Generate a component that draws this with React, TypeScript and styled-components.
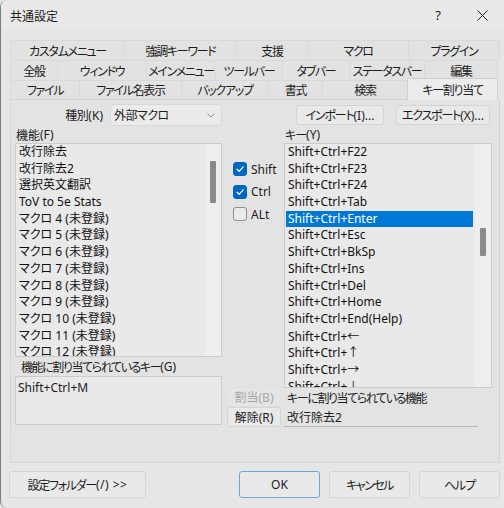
import React from "react";
import styled, { createGlobalStyle } from "styled-components";

const GlobalStyle = createGlobalStyle`
  html, body { margin: 0; padding: 0; background: #e6e6e6; }
  body {
    font-family: "Noto Sans", "Noto Sans CJK JP", sans-serif;
    font-size: 12px;
    color: #1c1c1c;
    font-feature-settings: "palt" 1;
    font-variant-east-asian: proportional-width;
  }
  * { box-sizing: border-box; }
`;

const Window = styled.div`
  width: 504px;
  height: 508px;
  background: #e6e6e6;
  border-left: 1px solid #7c7c7c;
  border-top-left-radius: 7px;
  border-bottom-left-radius: 7px;
  display: flex;
  flex-direction: column;
  overflow: hidden;
`;

const TitleBar = styled.div`
  height: 30px;
  flex: 0 0 30px;
  display: flex;
  align-items: center;
  padding-left: 9px;
  background: #e9e9e9;
`;

const Title = styled.div`
  flex: 1;
  font-size: 12px;
  padding-top: 1px;
`;

const CaptionButton = styled.div`
  width: 44px;
  height: 30px;
  display: flex;
  align-items: center;
  justify-content: center;
  font-size: 13px;
  color: #1a1a1a;
`;

const Tabs = styled.div`
  margin: 10px 4px 0 9px;
  display: flex;
  flex-direction: column;
`;

const TabRow = styled.div<{ h: number }>`
  display: flex;
  height: ${(p) => p.h}px;
  position: relative;
`;

const Tab = styled.div<{ w: number; selected?: boolean }>`
  flex: 0 0 ${(p) => p.w}px;
  display: flex;
  align-items: center;
  justify-content: center;
  border: 1px solid #d9d9d9;
  border-bottom: none;
  margin-left: -1px;
  background: ${(p) => (p.selected ? "#ececec" : "#e2e2e2")};
  color: #1c1c1c;
  letter-spacing: -1.3px;
  white-space: nowrap;
  position: relative;
  ${(p) =>
    p.selected
      ? `margin-top: -2px; height: calc(100% + 3px); z-index: 2; border-color: #d0d0d0;`
      : ``}
  &:first-child { margin-left: 0; }
`;

const Panel = styled.div`
  margin: 0 4px 0 9px;
  height: 364px;
  border: 1px solid #d3d3d3;
  background: #e3e3e3;
  display: flex;
  flex-direction: column;
`;

const TopRow = styled.div`
  margin-top: 4px;
  height: 22px;
  display: flex;
  align-items: center;
`;

const KindLabel = styled.div`
  width: 92px;
  text-align: right;
`;

const Combo = styled.div`
  margin-left: 7px;
  width: 112px;
  height: 22px;
  border: 1px solid #d8d8d8;
  border-radius: 3px;
  background: #ebebeb;
  display: flex;
  align-items: center;
  justify-content: space-between;
  padding: 0 6px 0 3px;
  letter-spacing: -0.5px;
`;

const Mn = styled.span<{ ls?: number }>`
  letter-spacing: ${(p) => p.ls ?? 0}px;
`;

const Jp = styled.span<{ ls?: number }>`
  letter-spacing: ${(p) => p.ls ?? -1.2}px;
`;

const PushButton = styled.div<{ w: number; h?: number; ml?: number; disabled?: boolean; focused?: boolean }>`
  width: ${(p) => p.w}px;
  height: ${(p) => p.h ?? 20}px;
  margin-left: ${(p) => p.ml ?? 0}px;
  border: 1px solid ${(p) => (p.focused ? "#6aa5dc" : p.disabled ? "#e0e0e0" : "#d4d4d4")};
  border-radius: 3px;
  background: ${(p) => (p.disabled ? "#e5e5e5" : "#e9e9e9")};
  color: ${(p) => (p.disabled ? "#a6a6a6" : "#1c1c1c")};
  display: flex;
  align-items: center;
  justify-content: center;
  white-space: nowrap;
`;

const Body = styled.div`
  display: flex;
  padding-left: 4px;
`;

const Column = styled.div<{ w: number; ml?: number }>`
  width: ${(p) => p.w}px;
  margin-left: ${(p) => p.ml ?? 0}px;
  display: flex;
  flex-direction: column;
`;

const FieldLabel = styled.div<{ h: number; pl?: number }>`
  height: ${(p) => p.h}px;
  padding-left: ${(p) => p.pl ?? 1}px;
  display: flex;
  align-items: center;
  white-space: nowrap;
`;

const ListBox = styled.div<{ h: number }>`
  height: ${(p) => p.h}px;
  border: 1px solid #cbcbcb;
  background: #e9e9e9;
  display: flex;
  overflow: hidden;
`;

const Items = styled.div`
  flex: 1;
  padding: 0 2px 0 1px;
  overflow: hidden;
`;

const Item = styled.div<{ selected?: boolean }>`
  height: 16.7px;
  line-height: 16.7px;
  padding-left: 2px;
  white-space: nowrap;
  background: ${(p) => (p.selected ? "#0078d4" : "transparent")};
  color: ${(p) => (p.selected ? "#fff" : "#111")};
`;

const Track = styled.div`
  width: 16px;
  background: #eeeeee;
  display: flex;
  flex-direction: column;
  align-items: center;
`;

const Thumb = styled.div<{ top: number; h: number }>`
  width: 6px;
  margin-top: ${(p) => p.top}px;
  height: ${(p) => p.h}px;
  background: #8a8a8a;
  border-radius: 1px;
`;

const TextBox = styled.div<{ h: number }>`
  height: ${(p) => p.h}px;
  border: 1px solid #cbcbcb;
  background: #e9e9e9;
  padding: 2px 2px;
`;

const Checks = styled.div`
  margin-top: 32px;
  padding-left: 6px;
  display: flex;
  flex-direction: column;
`;

const CheckRow = styled.div`
  height: 22.5px;
  display: flex;
  align-items: center;
  gap: 4px;
`;

const CheckMark = styled.div<{ checked?: boolean }>`
  width: 14px;
  height: 14px;
  border-radius: 3px;
  background: ${(p) => (p.checked ? "#0067c0" : "#ececec")};
  border: 1px solid ${(p) => (p.checked ? "#0067c0" : "#8e8e8e")};
  display: flex;
  align-items: center;
  justify-content: center;
`;

const ButtonStack = styled.div`
  margin-top: auto;
  display: flex;
  flex-direction: column;
`;

const ReadField = styled.div`
  height: 20px;
  width: 194px;
  border-bottom: 1px solid #b8b8b8;
  padding-left: 3px;
  display: flex;
  align-items: center;
`;

const Footer = styled.div`
  margin-top: 8px;
  display: flex;
  padding: 0 4px 0 8px;
`;

const Spacer = styled.div`
  flex: 1;
`;

const Arrow = styled.span`
  font-family: "Noto Sans CJK JP", sans-serif;
`;

const tabRows: { h: number; tabs: { label: string; w: number; selected?: boolean }[] }[] = [
  {
    h: 20,
    tabs: [
      { label: "カスタムメニュー", w: 115 },
      { label: "強調キーワード", w: 113 },
      { label: "支援", w: 72 },
      { label: "マクロ", w: 102 },
      { label: "プラグイン", w: 92 },
    ],
  },
  {
    h: 20,
    tabs: [
      { label: "全般", w: 48 },
      { label: "ウィンドウ", w: 90 },
      { label: "メインメニュー", w: 70 },
      { label: "ツールバー", w: 68 },
      { label: "タブバー", w: 68 },
      { label: "ステータスバー", w: 76 },
      { label: "編集", w: 74 },
    ],
  },
  {
    h: 19,
    tabs: [
      { label: "ファイル", w: 70 },
      { label: "ファイル名表示", w: 103 },
      { label: "バックアップ", w: 88 },
      { label: "書式", w: 55 },
      { label: "検索", w: 86 },
      { label: "キー割り当て", w: 91, selected: true },
    ],
  },
];

const functions = [
  "改行除去",
  "改行除去2",
  "選択英文翻訳",
  "ToV to 5e Stats",
  "マクロ 4 (未登録)",
  "マクロ 5 (未登録)",
  "マクロ 6 (未登録)",
  "マクロ 7 (未登録)",
  "マクロ 8 (未登録)",
  "マクロ 9 (未登録)",
  "マクロ 10 (未登録)",
  "マクロ 11 (未登録)",
  "マクロ 12 (未登録)",
];

const keys = [
  "F22",
  "F23",
  "F24",
  "Tab",
  "Enter",
  "Esc",
  "BkSp",
  "Ins",
  "Del",
  "Home",
  "End(Help)",
  "←",
  "↑",
  "→",
  "↓",
];

const CheckIcon = () => (
  <svg width="10" height="10" viewBox="0 0 10 10">
    <path d="M2 5.2 L4.2 7.3 L8.2 2.8" fill="none" stroke="#fff" strokeWidth="1.2" strokeLinecap="round" strokeLinejoin="round" />
  </svg>
);

const Chevron = () => (
  <svg width="8" height="5" viewBox="0 0 8 5">
    <path d="M0.5 0.8 L4 4 L7.5 0.8" fill="none" stroke="#8a8a8a" strokeWidth="1" />
  </svg>
);

const CloseIcon = () => (
  <svg width="11" height="11" viewBox="0 0 11 11">
    <path d="M0.5 0.5 L10.5 10.5 M10.5 0.5 L0.5 10.5" stroke="#1a1a1a" strokeWidth="1" />
  </svg>
);

export default function App() {
  return (
    <>
      <GlobalStyle />
      <Window>
        <TitleBar>
          <Title>共通設定</Title>
          <CaptionButton>?</CaptionButton>
          <CaptionButton>
            <CloseIcon />
          </CaptionButton>
        </TitleBar>

        <Tabs>
          {tabRows.map((row, i) => (
            <TabRow key={i} h={row.h}>
              {row.tabs.map((t) => (
                <Tab key={t.label} w={t.w} selected={t.selected}>
                  {t.label}
                </Tab>
              ))}
            </TabRow>
          ))}
        </Tabs>

        <Panel>
          <TopRow>
            <KindLabel>
              <Jp ls={-0.5}>種別</Jp>
              <Mn>(K)</Mn>
            </KindLabel>
            <Combo>
              <span>外部マクロ</span>
              <Chevron />
            </Combo>
            <PushButton w={88} h={20} ml={74}>
              <Jp>インポート</Jp>
              <Mn>(I)...</Mn>
            </PushButton>
            <PushButton w={94} h={20} ml={12}>
              <Jp>エクスポート</Jp>
              <Mn>(X)...</Mn>
            </PushButton>
          </TopRow>

          <Body>
            <Column w={207}>
              <FieldLabel h={17}>
                <Jp ls={0}>機能</Jp>
                <Mn>(F)</Mn>
              </FieldLabel>
              <ListBox h={214}>
                <Items>
                  {functions.map((f) => (
                    <Item key={f}>{f}</Item>
                  ))}
                </Items>
                <Track>
                  <Thumb top={17} h={42} />
                </Track>
              </ListBox>
              <FieldLabel h={19} pl={6}>
                <Jp ls={-1.4}>機能に割り当てられているキー</Jp>
                <Mn>(G)</Mn>
              </FieldLabel>
              <TextBox h={49}>Shift+Ctrl+M</TextBox>
            </Column>

            <Column w={54} ml={5}>
              <Checks>
                <CheckRow>
                  <CheckMark checked>
                    <CheckIcon />
                  </CheckMark>
                  Shift
                </CheckRow>
                <CheckRow>
                  <CheckMark checked>
                    <CheckIcon />
                  </CheckMark>
                  Ctrl
                </CheckRow>
                <CheckRow>
                  <CheckMark />
                  ALt
                </CheckRow>
              </Checks>
              <ButtonStack>
                <PushButton w={54} h={20} disabled>
                  <Jp ls={0}>割当</Jp>
                  <Mn>(B)</Mn>
                </PushButton>
                <PushButton w={54} h={20}>
                  <Jp ls={0}>解除</Jp>
                  <Mn>(R)</Mn>
                </PushButton>
              </ButtonStack>
            </Column>

            <Column w={208} ml={3}>
              <FieldLabel h={17}>
                <Jp ls={-1}>キー</Jp>
                <Mn>(Y)</Mn>
              </FieldLabel>
              <ListBox h={245}>
                <Items>
                  {keys.map((k) => (
                    <Item key={k} selected={k === "Enter"}>
                      Shift+Ctrl+{k.length === 1 ? <Arrow>{k}</Arrow> : k}
                    </Item>
                  ))}
                </Items>
                <Track>
                  <Thumb top={84} h={28} />
                </Track>
              </ListBox>
              <FieldLabel h={19} pl={3}>
                <Jp ls={-1.4}>キーに割り当てられている機能</Jp>
              </FieldLabel>
              <ReadField>改行除去2</ReadField>
            </Column>
          </Body>
        </Panel>

        <Footer>
          <PushButton w={137} h={27}>
            <Jp ls={-1.3}>設定フォルダー</Jp>
            <Mn ls={0.5}>(/) &gt;&gt;</Mn>
          </PushButton>
          <Spacer />
          <PushButton w={81} h={27} focused>
            OK
          </PushButton>
          <PushButton w={81} h={27} ml={9}>
            <Jp ls={-1.5}>キャンセル</Jp>
          </PushButton>
          <PushButton w={81} h={27} ml={9}>
            <Jp ls={-1}>ヘルプ</Jp>
          </PushButton>
        </Footer>
      </Window>
    </>
  );
}
